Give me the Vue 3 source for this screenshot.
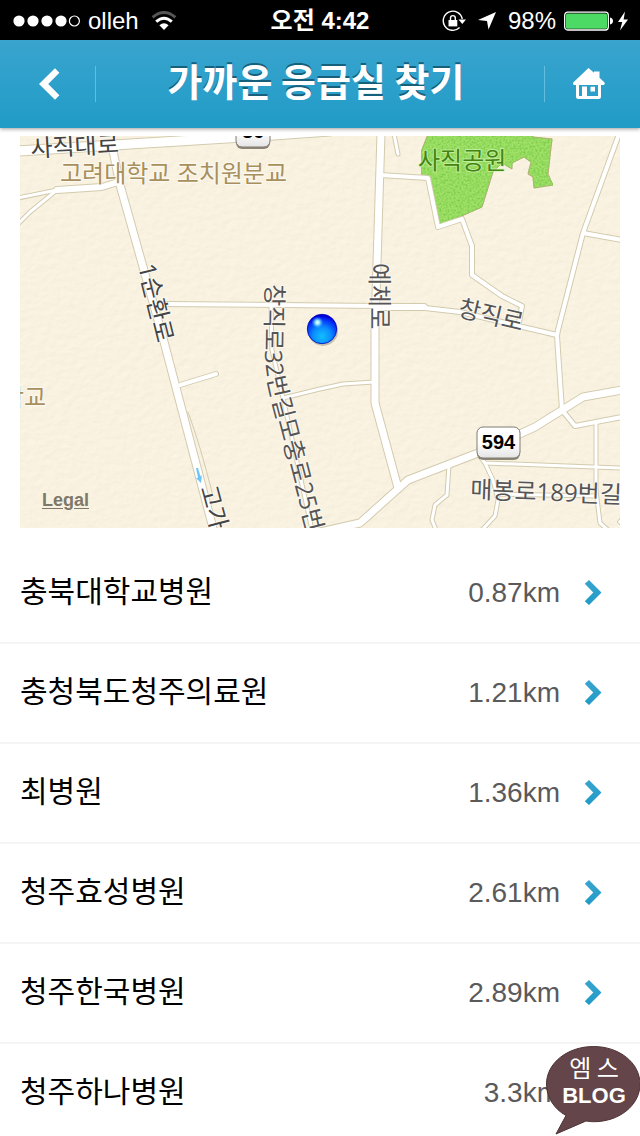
<template>
  <div class="app">
    <div class="status-bar">
      <div class="status-side">
        <svg class="signal" viewBox="0 0 68 12" aria-hidden="true">
          <circle v-for="n in 4" :key="n" :cx="n * 14 - 7" cy="6" r="5.6" fill="#fff" />
          <circle cx="62.4" cy="6" r="5" fill="none" stroke="#fff" stroke-width="1.2" />
        </svg>
        <span class="carrier">olleh</span>
        <svg class="wifi" viewBox="0 0 26 20" aria-hidden="true">
          <path d="M1.6 6.4Q13-3.4 24.4 6.4" fill="none" stroke="#555" stroke-width="3" />
          <path d="M5.2 10.6Q13 3.8 20.8 10.6" fill="none" stroke="#fff" stroke-width="3" />
          <path d="M8.4 14.2Q13 10.2 17.6 14.2L13 19Z" fill="#fff" />
        </svg>
      </div>
      <span class="clock">오전 4:42</span>
      <div class="status-side end">
        <svg class="lock" viewBox="0 0 24 22" aria-hidden="true">
          <path d="M17.6 17.6A9.6 9.6 0 1 1 20.3 9" fill="none" stroke="#fff" stroke-width="1.4" />
          <path d="M16.500 9.500h7.500l-3.700 4.500z" fill="#fff" />
          <path d="M6.500 10h8.800v6.400H6.500z" fill="#fff" />
          <path d="M8.500 10.500V8a2.400 2.400 0 0 1 4.800 0v2.500" fill="none" stroke="#fff" stroke-width="1.4" />
        </svg>
        <svg class="locate" viewBox="0 0 18 18" aria-hidden="true">
          <path d="M18 0 10.500 17.500 9 9 0 8z" fill="#fff" />
        </svg>
        <span class="percent">98%</span>
        <svg class="battery" viewBox="0 0 64 20" aria-hidden="true">
          <rect x=".7" y="1.200" width="43.600" height="17.800" rx="3" fill="none" stroke="#fff" stroke-width="1.300" />
          <rect x="2" y="2.500" width="41" height="15.200" rx="1.500" fill="#4cd964" />
          <path d="M46 6.500q3 .8 3 3.500t-3 3.500z" fill="#fff" />
          <path d="M61 .5 54 11h4.200L56 19.500 64 8.500h-4.400z" fill="#fff" />
        </svg>
      </div>
    </div>

    <header class="header">
      <button class="nav-btn back" type="button" aria-label="뒤로">
        <svg viewBox="0 0 22 32" aria-hidden="true">
          <path d="M0 16 16 .3l4.400 4.400L9.200 16l11.200 11.300L16 31.700z" fill="#fff" />
        </svg>
      </button>
      <h1>가까운 응급실 찾기</h1>
      <button class="nav-btn home" type="button" aria-label="홈">
        <svg viewBox="0 0 32 32" aria-hidden="true">
          <path
            fill="#fff"
            fill-rule="evenodd"
            d="M15.500 0 21 4.800V3.500h5.500v6.300l4.800 4.500c.8.900.4 2.700-1 2.700H28v11.500q0 2.500-2.500 2.500h-20Q3 31 3 28.500V17H1.200C0 17-.4 15.200.5 14.300zM6 17v11h3v-9.500h5V28h11V17zm11.500 1.800h4.500v4.600h-4.500z"
          />
        </svg>
      </button>
    </header>

    <main class="content">
      <section class="map" aria-label="지도">
        <svg class="map-canvas" viewBox="20 136 600 392">
          <defs>
            <filter id="paper" x="0" y="0" width="100%" height="100%">
              <feTurbulence type="fractalNoise" baseFrequency=".12 .16" numOctaves="3" seed="4" result="noise" />
              <feDiffuseLighting in="noise" surfaceScale=".35" lighting-color="#faf3e1">
                <feDistantLight azimuth="235" elevation="72" />
              </feDiffuseLighting>
              <feComponentTransfer>
                <feFuncR type="linear" slope="1.045" />
                <feFuncG type="linear" slope="1.045" />
                <feFuncB type="linear" slope="1.045" />
              </feComponentTransfer>
            </filter>
            <filter id="grass" x="0" y="0" width="100%" height="100%">
              <feTurbulence type="fractalNoise" baseFrequency=".5" numOctaves="2" seed="9" />
              <feColorMatrix values="0 0 0 0 .22  0 0 0 0 .62  0 0 0 0 .08  3 0 0 0 -1.150" />
              <feComposite in2="SourceGraphic" operator="in" result="blades" />
              <feMerge>
                <feMergeNode in="SourceGraphic" />
                <feMergeNode in="blades" />
              </feMerge>
            </filter>
            <radialGradient id="pin" cx=".5" cy=".75" r=".7">
              <stop offset="0" stop-color="#12c0ff" />
              <stop offset=".45" stop-color="#0a8cff" />
              <stop offset=".85" stop-color="#0428f4" />
              <stop offset="1" stop-color="#0000d8" />
            </radialGradient>
            <radialGradient id="glint">
              <stop offset="0" stop-color="#fff" />
              <stop offset=".35" stop-color="#8fe6ff" />
              <stop offset="1" stop-color="#22a8ff" stop-opacity="0" />
            </radialGradient>
            <linearGradient id="shield" x1="0" y1="0" x2="0" y2="1">
              <stop offset=".5" stop-color="#fff" />
              <stop offset="1" stop-color="#e4e4e4" />
            </linearGradient>
            <path id="long-street" d="M266 284 265 350 Q265 372 271 395L307 532 328 610" />
          </defs>

          <rect x="20" y="136" width="600" height="392" fill="#f8f1de" />
          <rect x="20" y="136" width="600" height="392" filter="url(#paper)" />
          <path
            filter="url(#grass)"
            d="M428 134 421 152V175L430 177 439 226 482 207 493 172 502 163 512 169V163L524 157 531 162 528 174 533 177 534 188 553 185 548 174 552 139 533 137V134z"
            fill="#a0e268"
            stroke="#b4a878"
          />

          <!-- casing first, then the white surface, so that junctions stay open -->
          <g class="casing">
            <path v-for="(road, i) in roads" :key="i" :d="road.d" :stroke-width="road.w + 2" />
            <path d="M188 412Q200 444 213 496" stroke-width="1" />
          </g>
          <g class="surface">
            <path v-for="(road, i) in roads" :key="i" :d="road.d" :stroke-width="road.w" />
          </g>

          <g class="labels">
            <text
              v-for="label in labels"
              :key="label.text"
              :class="label.kind"
              :transform="`translate(${label.x} ${label.y}) rotate(${label.turn})`"
            >{{ label.text }}</text>
            <text><textPath href="#long-street">창직로32번길모충로25번길</textPath></text>
          </g>
          <path d="M196 468h2l2 7 1.500 2v-2h.5l-1 8-5-5h2l-.5-3z" fill="#6cc3f7" />

          <g v-for="s in shields" :key="s.no" class="shield">
            <rect :x="s.x" :y="s.y + 2" :width="s.w" height="31" rx="6" fill="#8c8677" />
            <rect :x="s.x" :y="s.y" :width="s.w" height="31" rx="6" fill="url(#shield)" stroke="#817c72" />
            <text :x="s.x + s.w / 2" :y="s.y + 22">{{ s.no }}</text>
          </g>

          <circle cx="323" cy="331" r="15" fill="#6b6452" opacity=".35" />
          <circle cx="322" cy="329" r="14.700" fill="url(#pin)" stroke="#0000b8" stroke-width=".8" />
          <circle cx="317.500" cy="322.500" r="6" fill="url(#glint)" />
        </svg>
        <a class="legal" href="#legal">Legal</a>
      </section>

      <ul class="hospitals">
        <li v-for="h in hospitals" :key="h.name">
          <a :href="'#' + h.name">
            <span class="name">{{ h.name }}</span>
            <span class="distance">{{ h.distance }}</span>
            <svg class="chevron" viewBox="0 0 18 26" aria-hidden="true">
              <defs>
                <linearGradient id="chev" x1="0" y1="0" x2="0" y2="1">
                  <stop offset="0" stop-color="#39a4cf" />
                  <stop offset="1" stop-color="#1f9bc7" />
                </linearGradient>
              </defs>
              <path d="M5 0 17.500 12.500 5 25 .8 21.300 9.300 12.500.8 3.700z" fill="url(#chev)" />
            </svg>
          </a>
        </li>
      </ul>
    </main>

    <svg class="blog-badge" viewBox="0 0 94 90" role="img" aria-label="엠스 BLOG">
      <path
        d="M47.500.5C73.500.5 94 17 94 38 94 60 72 76 47.500 75.700 44 75.600 42 75.400 40 75L10 88 20 69.500C8 63 .5 51 .5 38 .5 17 21.500.5 47.500.5z"
        fill="#644549"
        stroke="#4c3236"
      />
      <text class="badge-ko" x="48" y="31">엠 스</text>
      <text class="badge-en" x="48" y="57">BLOG</text>
    </svg>
  </div>
</template>

<script setup>
const hospitals = [
  { name: "충북대학교병원", distance: "0.87km" },
  { name: "충청북도청주의료원", distance: "1.21km" },
  { name: "최병원", distance: "1.36km" },
  { name: "청주효성병원", distance: "2.61km" },
  { name: "청주한국병원", distance: "2.89km" },
  { name: "청주하나병원", distance: "3.3km" },
];

// d: road centre line, w: width of the white surface
const roads = [
  // side streets
  { w: 3, d: "M57 190 18 198" },
  { w: 3, d: "M57 190 30 212 18 224" },
  { w: 4, d: "M165 304 380 306M425 308 460 312 527 328 557 335" },
  { w: 4, d: "M180 385 216 374" },
  { w: 3, d: "M271 306 272 350 283 398 312 530M283 398 320 389 343 384 374 382" },
  { w: 4, d: "M380 175 428 178 438 227 462 219 472 246V275L502 296 522 306 519 322" },
  { w: 3, d: "M394 134 398 154" },
  { w: 4, d: "M619 134 583 233 558 330 557 336 562 410 575 426 622 417M583 233 622 240" },
  { w: 3, d: "M596 422V490L600 523 608 530M478 454 485 463 622 468" },
  { w: 3, d: "M485 463 493 480 498 500 495 516 482 530M498 494 596 496" },
  { w: 3, d: "M449 465 447 495 435 505 432 520 436 530" },
  { w: 2, d: "M624 516 619 522 624 526" },
  // main roads
  { w: 6, d: "M118 182 102 187 57 190" },
  { w: 6, d: "M378 307H424" },
  { w: 9, d: "M18 151 130 144 260 136 330 131" },
  { w: 7, d: "M112 146 120 185 163 338 214 532" },
  { w: 7, d: "M381 134 377 263 375 330V403L398 488" },
  { w: 7, d: "M320 532 360 523 408 480 478 453 535 427 583 397 622 390" },
];

const labels = [
  { text: "사직대로", x: 31, y: 157, turn: -3, kind: "dark" },
  { text: "고려대학교 조치원분교", x: 60, y: 182, turn: 0, kind: "school" },
  { text: "학교", x: 2, y: 406, turn: 0, kind: "school" },
  { text: "사직공원", x: 418, y: 169, turn: 0, kind: "park" },
  { text: "1순환로", x: 138, y: 266, turn: 76, kind: "dark" },
  { text: "예체로", x: 371, y: 263, turn: 90, kind: "" },
  { text: "창직로", x: 457, y: 316, turn: 13, kind: "" },
  { text: "매봉로189번길", x: 470, y: 498, turn: 2, kind: "" },
  { text: "고가", x: 200, y: 488, turn: 75, kind: "dark" },
];

const shields = [
  { no: "36", x: 236, y: 116, w: 34 },
  { no: "594", x: 477, y: 427, w: 43 },
];
</script>

<style>
body {
  margin: 0;
  background: #fff;
}
</style>

<style scoped>
.app {
  position: relative;
  display: flex;
  flex-direction: column;
  height: 100vh;
  overflow: hidden;
  background: #fff;
  font-family: "Liberation Sans", "Noto Sans CJK KR", sans-serif;
}

/* phone status bar */
.status-bar {
  flex: none;
  display: grid;
  grid-template-columns: 1fr auto 1fr;
  align-items: center;
  height: 38px;
  padding: 2px 12px 0;
  background: #000;
  color: #fff;
  font-size: 24px;
  line-height: 38px;
}
.status-side {
  display: flex;
  align-items: center;
}
.status-side.end { justify-content: flex-end; }
.signal { width: 68px; height: 12px; }
.carrier { margin: 0 12px 0 8px; }
.wifi { width: 26px; height: 20px; }
.clock {
  font-weight: 700;
  font-size: 24px;
}
.lock { width: 24px; height: 22px; }
.locate { width: 18px; height: 18px; margin: 0 12px; }
.battery { width: 64px; height: 20px; margin-left: 8px; }

/* title bar */
.header {
  position: relative;
  z-index: 1;
  flex: none;
  display: flex;
  align-items: center;
  height: 88px;
  background: linear-gradient(#39a4ce, #209cc7);
  box-shadow: 0 1px 4px rgba(0, 0, 0, 0.4);
}
.header h1 {
  flex: 1;
  margin: 0;
  padding: 0 8px 8px 0;
  text-align: center;
  font-family: "Noto Sans CJK KR", sans-serif;
  font-size: 38px;
  font-weight: 700;
  line-height: 56px;
  white-space: nowrap;
  color: #fff;
  text-shadow: 0 -2px 0 #17607c;
}
.nav-btn {
  box-sizing: border-box;
  display: flex;
  align-items: center;
  justify-content: center;
  width: 96px;
  height: 36px;
  padding: 0;
  border: 0 solid #62bde0;
  background: none;
}
.nav-btn svg { height: 32px; }
.back {
  padding-left: 4px;
  border-right-width: 1px;
}
.home {
  padding-right: 8px;
  border-left-width: 1px;
}
.back svg { width: 22px; }
.home svg { width: 32px; }

.content {
  flex: 1;
  min-height: 0;
  overflow-y: auto;
  scrollbar-width: none;
}

/* map */
.map {
  position: relative;
  margin: 8px 20px 16px;
}
.map-canvas {
  display: block;
  width: 100%;
}
.casing,
.surface {
  fill: none;
  stroke-linecap: round;
  stroke-linejoin: round;
}
.casing { stroke: #d3cbae; }
.surface { stroke: #fff; }
.labels text {
  font-family: "Open Sans", "Noto Sans CJK KR", sans-serif;
  font-size: 24px;
  fill: #555;
  stroke: rgba(255, 255, 255, 0.6);
  stroke-width: 2px;
  stroke-linejoin: round;
  paint-order: stroke;
}
.labels .dark { fill: #444; }
.labels .school { fill: #a8905c; }
.labels .park {
  fill: #438511;
  stroke: rgba(210, 245, 180, 0.7);
}
.shield text {
  font-size: 20px;
  font-weight: 700;
  text-anchor: middle;
  fill: #000;
}
.legal {
  position: absolute;
  left: 22px;
  bottom: 18px;
  font-size: 18px;
  font-weight: 700;
  line-height: 20px;
  color: #7d7869;
  text-underline-offset: 2px;
}

/* hospital list */
.hospitals {
  margin: 0;
  padding: 0;
  list-style: none;
}
.hospitals li { border-bottom: 2px solid #f5f5f5; }
.hospitals a {
  display: flex;
  align-items: center;
  height: 98px;
  padding: 0 38px 0 20px;
  color: #000;
  text-decoration: none;
}
.name {
  flex: 1;
  padding-bottom: 8px;
  font-family: "Noto Sans CJK KR", sans-serif;
  font-size: 30px;
  line-height: 44px;
}
.distance {
  font-size: 28px;
  color: #5a5a5a;
}
.chevron {
  width: 18px;
  height: 26px;
  margin-left: 24px;
}

/* speech bubble over the corner of the list */
.blog-badge {
  position: absolute;
  right: 0;
  bottom: 0;
  width: 94px;
  height: 90px;
}
.blog-badge text {
  fill: #fff;
  text-anchor: middle;
}
.badge-ko {
  font-family: "Noto Sans CJK KR", sans-serif;
  font-size: 24px;
}
.badge-en {
  font-size: 22px;
  font-weight: 700;
}
</style>
